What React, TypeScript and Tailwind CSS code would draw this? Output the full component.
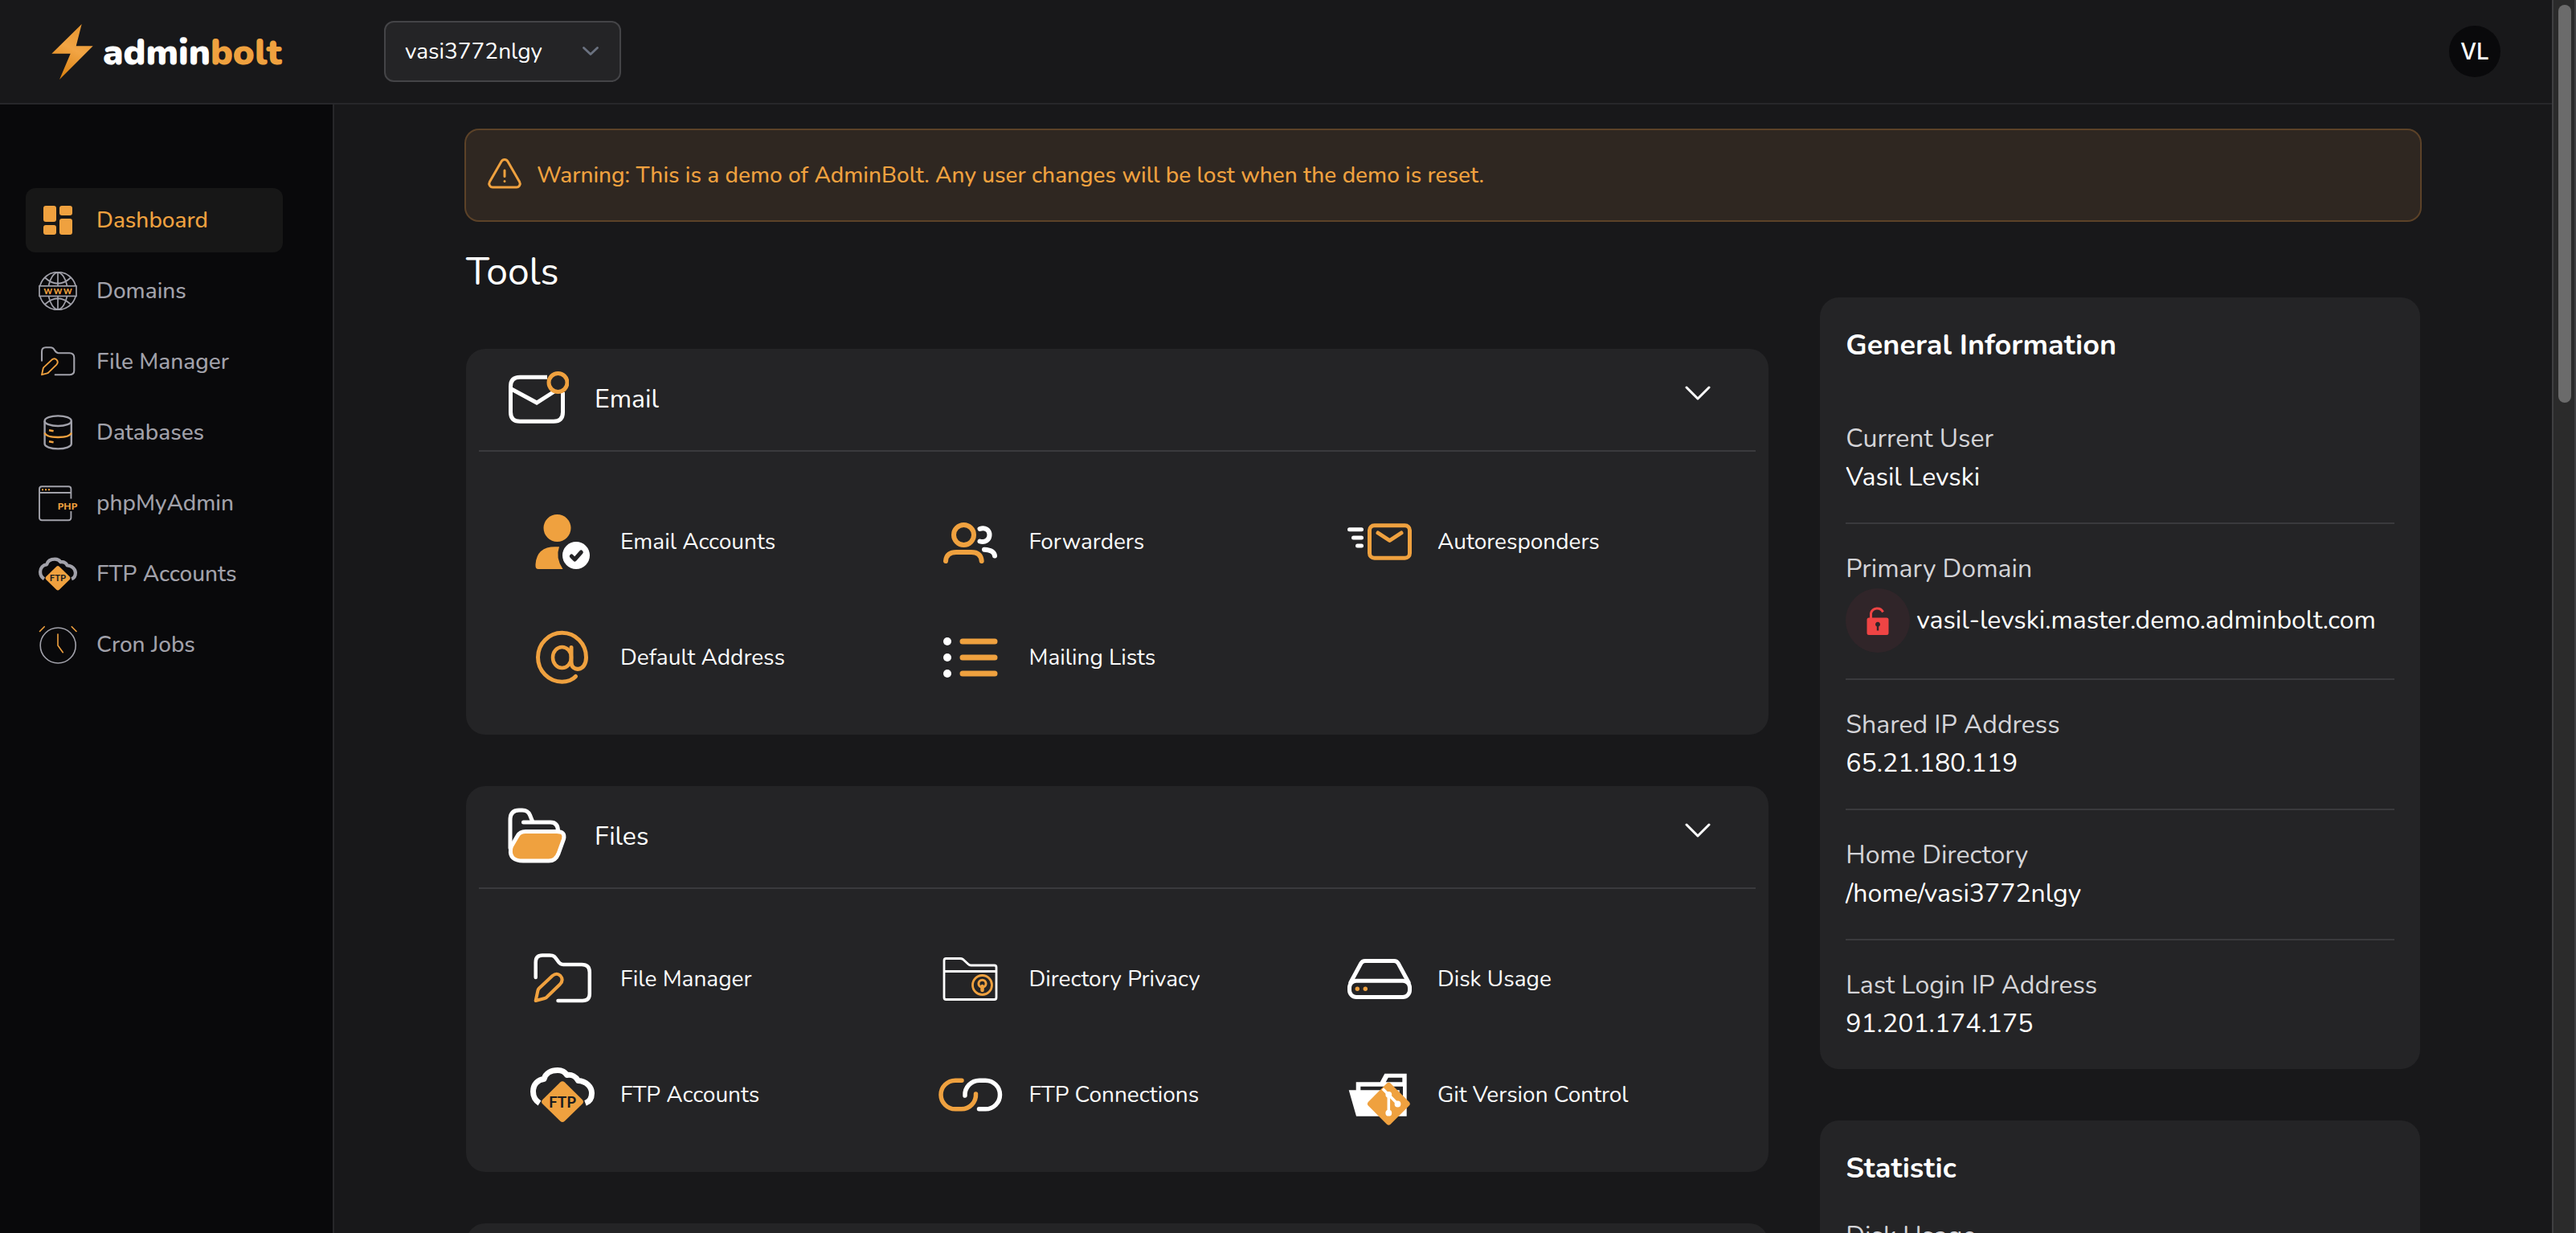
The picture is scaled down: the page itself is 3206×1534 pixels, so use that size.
import type { ReactNode } from "react";
import { HiOutlineExclamationTriangle } from "react-icons/hi2";

const ORANGE = "#efa13f";

/* ---------- Icons shared by the sidebar and the tool cards (80-unit grid) ---------- */

function FileManagerIcon({ weight = 4.5 }: { weight?: number }) {
  return (
    <svg viewBox="0 0 80 80" fill="none" className="size-full" aria-hidden="true" strokeLinecap="round" strokeLinejoin="round">
      <path d="M6.7 38V19Q6.700 10.500 15 10.500H24C29.500 10.500 30.500 12 33.500 16.500Q37 22 41 22H64Q73.800 22 73.800 31.500V58.500Q73.800 67 65 67H34.500" stroke="currentColor" strokeWidth={weight} />
      <path d="M6.700 67L9.500 54Q10 52.500 11 51.500L27.500 36Q33 31.500 37.500 36Q42 41 37 46.500L21.500 61.500Q20 63.500 18 64Z" stroke={ORANGE} strokeWidth={weight * 0.9} />
    </svg>
  );
}

function FtpAccountsIcon() {
  return (
    <svg viewBox="0 0 80 80" fill="none" className="size-full" aria-hidden="true">
      <path d="M11.500 50.500C6 47 3.500 42 3.500 36C3.500 27 9.500 21 17 20.500C19 13 26 9.500 34 9.500C39 9.500 43.500 12 45.500 15.500C51.500 14.500 57 17.500 59.500 22.500C69.500 23 76.500 30 76.500 38C76.500 44 74 48.500 68.500 50.500" stroke="currentColor" strokeWidth="7" strokeLinejoin="round" />
      <path d="M37.200 24.600Q40 22 42.800 24.600L64.600 45.900Q67.400 48.700 64.600 51.500L42.800 72.800Q40 75.400 37.200 72.800L15.400 51.500Q12.600 48.700 15.400 45.900Z" fill={ORANGE} />
      <text x="40" y="55.500" textAnchor="middle" fontFamily="Lato, sans-serif" fontWeight="700" fontSize="19" fill="#1c1c1e">FTP</text>
    </svg>
  );
}

/* ---------- Sidebar icons (48-unit grid) ---------- */

function DashboardIcon() {
  return (
    <svg viewBox="0 0 48 48" className="size-full" aria-hidden="true" fill={ORANGE}>
      <rect x="6" y="6" width="16" height="20" rx="3" />
      <rect x="6" y="30" width="16" height="12" rx="3" />
      <rect x="26" y="6" width="16" height="12" rx="3" />
      <rect x="26" y="22" width="16" height="20" rx="3" />
    </svg>
  );
}

function DomainsIcon() {
  return (
    <svg viewBox="0 0 48 48" fill="none" className="size-full" aria-hidden="true" stroke="currentColor" strokeWidth="1.700">
      <path d="M1.800 17.500A23 23 0 0 1 46.200 17.500M1.800 30.500A23 23 0 0 0 46.200 30.500" />
      <path d="M12.500 17.500C14.500 8 19 1.200 24 1.200S33.500 8 35.500 17.500M12.500 30.500C14.500 40 19 46.800 24 46.800S33.500 40 35.500 30.500" />
      <path d="M24 1V17.500M24 30.500V47M8 7.500Q24 22 40 7.500M8 40.500Q24 26 40 40.500" />
      <rect x="1" y="17.800" width="46" height="12.600" />
      <g textAnchor="middle" fontFamily="Lato, sans-serif" fontWeight="900" fontSize="10" fill={ORANGE} stroke="none">
        <text x="11.800" y="27.700">W</text>
        <text x="24" y="27.700">W</text>
        <text x="36.200" y="27.700">W</text>
      </g>
    </svg>
  );
}

function DatabaseIcon() {
  return (
    <svg viewBox="0 0 48 48" fill="none" className="size-full" aria-hidden="true" stroke="currentColor" strokeWidth="2.400">
      <ellipse cx="24.200" cy="9.700" rx="16.600" ry="6.300" />
      <path d="M7.600 10V38C7.600 41.500 15 44.400 24.200 44.400S40.800 41.500 40.800 38V10" />
      <path d="M7.600 24.500C8.600 27.800 15 30 24.200 30S39.800 27.800 40.800 24.500M13 21.300L18.600 22.300M13 35.300L18.600 36.300" stroke={ORANGE} />
    </svg>
  );
}

function PhpIcon() {
  return (
    <svg viewBox="0 0 48 48" fill="none" className="size-full overflow-visible" aria-hidden="true" stroke="currentColor" strokeWidth="1.900">
      <path d="M40.400 18.500V6.500Q40.400 3.300 37.200 3.300H4.200Q1 3.300 1 6.500V42Q1 45.200 4.200 45.200H37.200Q40.400 45.200 40.400 42V34M1 11H40.400" />
      <path d="M4 7.300H6M8 7.300H10M12 7.300H14" stroke={ORANGE} strokeWidth="2" />
      <text x="36" y="31.500" textAnchor="middle" fontFamily="Lato, sans-serif" fontWeight="900" fontSize="12" fill={ORANGE} stroke="none">PHP</text>
    </svg>
  );
}

function CronIcon() {
  return (
    <svg viewBox="0 0 48 48" fill="none" className="size-full" aria-hidden="true" stroke="currentColor" strokeWidth="1.600" strokeLinecap="round" strokeLinejoin="round">
      <circle cx="24.200" cy="25" r="22" />
      <path d="M24 11V25L30.300 33.700M1.500 7.500L7.200 1.700M47 7.500L41.300 1.700" stroke={ORANGE} />
    </svg>
  );
}

/* ---------- Tool icons (80-unit grid) ---------- */

function Tool80({ children }: { children: ReactNode }) {
  return (
    <svg viewBox="0 0 80 80" fill="none" className="size-full" aria-hidden="true" strokeLinecap="round" strokeLinejoin="round">
      {children}
    </svg>
  );
}

const emailIcon = (
  <Tool80>
    <path d="M53 12.200H19Q7.500 12.200 7.500 23.700V55.700Q7.500 67.200 19 67.200H61Q72.500 67.200 72.500 55.700V31" stroke="#fff" strokeWidth="5" strokeLinecap="butt" />
    <path d="M8.500 27L40 44L62 30" stroke="#fff" strokeWidth="5" strokeLinejoin="miter" strokeLinecap="butt" />
    <circle cx="66.500" cy="19" r="11.500" stroke={ORANGE} strokeWidth="5" fill="#242426" />
  </Tool80>
);

const filesIcon = (
  <Tool80>
    <path d="M7 54V19Q7 7 18 7H22Q29 7 31.500 13L34.500 20.500" stroke="#fff" strokeWidth="5" />
    <path d="M23.500 22H57Q66.500 22 66.500 33" stroke="#fff" strokeWidth="5" />
    <path d="M26 33.500H65Q76 33.500 73.500 43L67 61Q63.500 70 55 70H23Q6 70 7.500 56Q7.500 54 9 51L16 39Q19 33.500 26 33.500Z" fill={ORANGE} stroke="#fff" strokeWidth="5" />
  </Tool80>
);

const emailAccountsIcon = (
  <Tool80>
    <circle cx="33.500" cy="23" r="17" fill={ORANGE} />
    <path d="M36 46.300Q31 60 40.500 74H10Q6.500 74 6.500 70V68Q8 46.300 31 46.300Z" fill={ORANGE} />
    <circle cx="57" cy="57" r="17" fill="#fff" />
    <path d="M51.300 58L55.300 62L63.300 53" stroke="#242426" strokeWidth="5" />
  </Tool80>
);

const forwardersIcon = (
  <Tool80>
    <circle cx="31.500" cy="31.500" r="12.500" stroke={ORANGE} strokeWidth="6" />
    <path d="M9 64C9.500 56 15 53 22 53H41C48 53 53 56 53.700 64" stroke={ORANGE} strokeWidth="6" />
    <path d="M51.500 24C58 21.500 63.500 25.500 63.500 31.500S58 41.500 51.500 39.500M57 49.700C64 50 69.500 52.500 70 57.500" stroke="#fff" strokeWidth="6" />
  </Tool80>
);

const autorespondersIcon = (
  <Tool80>
    <path d="M2.500 24.700H17.500M7.500 35H17.500M12.500 45H17.500" stroke="#fff" strokeWidth="5" />
    <rect x="27.500" y="19.700" width="50" height="40.600" rx="6" stroke={ORANGE} strokeWidth="5" />
    <path d="M38 29L52.500 38.500L67 29" stroke={ORANGE} strokeWidth="5" />
  </Tool80>
);

const addressIcon = (
  <Tool80>
    <ellipse cx="39.500" cy="40" rx="11.500" ry="13" stroke={ORANGE} strokeWidth="4.500" />
    <path d="M51 27.500V46C51 58 69.500 58 69.500 40A30 30.500 0 1 0 39.500 70.300C46 70.300 53 67.500 56.500 63.500" stroke={ORANGE} strokeWidth="5" />
  </Tool80>
);

const mailingIcon = (
  <Tool80>
    <g fill="#fff">
      <circle cx="11" cy="20" r="5" />
      <circle cx="11" cy="40" r="5" />
      <circle cx="11" cy="60" r="5" />
    </g>
    <path d="M30 20H70M30 40H70M30 60H70" stroke={ORANGE} strokeWidth="7" />
  </Tool80>
);

const directoryIcon = (
  <Tool80>
    <path d="M7 30.500V17Q7 14.500 9.500 14.500H27Q29 14.500 30.500 15.500L37 21.500Q38.500 23 40.500 23H69.500Q72 23 72 25.500V63Q72 65.500 69.500 65.500H9.500Q7 65.500 7 63V30.500H72" stroke="#fff" strokeWidth="2.800" />
    <circle cx="54.500" cy="47.500" r="12" stroke={ORANGE} strokeWidth="2.800" />
    <circle cx="54.500" cy="45.800" r="4.600" stroke={ORANGE} strokeWidth="3" />
    <path d="M54.500 49V54" stroke={ORANGE} strokeWidth="4.500" />
  </Tool80>
);

const diskIcon = (
  <Tool80>
    <rect x="2.500" y="42.300" width="75" height="20.200" rx="8.500" stroke="#fff" strokeWidth="5" />
    <path d="M3.800 44.500L16.800 20.500Q18.500 17.500 22 17.500H58Q61.500 17.500 63.200 20.500L76.200 44.500" stroke="#fff" strokeWidth="5" />
    <circle cx="12.300" cy="52.300" r="2.700" fill={ORANGE} />
    <circle cx="22.300" cy="52.300" r="2.700" fill={ORANGE} />
  </Tool80>
);

const connectionsIcon = (
  <Tool80>
    <path d="M29 22.200H21A18 17.800 0 0 0 21 57.800H28.500A18 17.800 0 0 0 46.500 39" stroke={ORANGE} strokeWidth="5.500" />
    <path d="M50.500 57.800H58.500A18 17.800 0 0 0 58.500 22.200H51A18 17.800 0 0 0 33 41" stroke="#fff" strokeWidth="5.500" />
  </Tool80>
);

const gitIcon = (
  <Tool80>
    <path fillRule="evenodd" fill="#fff" d="M1.700 34.300H10.700V24.300H40.700L46.300 13.700H73.700V66.700H11ZM50.800 18.700L47.700 24.300H68.300V18.700ZM16.300 29.800V34.300H64.700V48H69V29.800Z" />
    <path d="M49 25.800Q51.300 23.800 53.600 25.800L76.800 49Q78.900 51.300 76.800 53.600L53.600 76.800Q51.300 78.900 49 76.800L25.800 53.600Q23.800 51.300 25.800 49Z" fill={ORANGE} />
    <path d="M43.800 32.500L51.300 40L62.300 51.300M51.300 40V62.700" stroke="#fff" strokeWidth="3.500" strokeLinecap="butt" />
    <g fill="#fff">
      <circle cx="51.300" cy="39.800" r="3.900" />
      <circle cx="62.500" cy="51.500" r="3.900" />
      <circle cx="51.300" cy="62.700" r="3.900" />
    </g>
  </Tool80>
);

/* ---------- Data ---------- */

const navigation: { label: string; icon: ReactNode; active?: boolean }[] = [
  { label: "Dashboard", icon: <DashboardIcon />, active: true },
  { label: "Domains", icon: <DomainsIcon /> },
  { label: "File Manager", icon: <FileManagerIcon weight={3.5} /> },
  { label: "Databases", icon: <DatabaseIcon /> },
  { label: "phpMyAdmin", icon: <PhpIcon /> },
  { label: "FTP Accounts", icon: <FtpAccountsIcon /> },
  { label: "Cron Jobs", icon: <CronIcon /> },
];

type Tool = { label: string; icon: ReactNode };

const emailTools: Tool[] = [
  { label: "Email Accounts", icon: emailAccountsIcon },
  { label: "Forwarders", icon: forwardersIcon },
  { label: "Autoresponders", icon: autorespondersIcon },
  { label: "Default Address", icon: addressIcon },
  { label: "Mailing Lists", icon: mailingIcon },
];

const fileTools: Tool[] = [
  { label: "File Manager", icon: <FileManagerIcon /> },
  { label: "Directory Privacy", icon: directoryIcon },
  { label: "Disk Usage", icon: diskIcon },
  { label: "FTP Accounts", icon: <FtpAccountsIcon /> },
  { label: "FTP Connections", icon: connectionsIcon },
  { label: "Git Version Control", icon: gitIcon },
];

/* ---------- Pieces ---------- */

function Logo() {
  return (
    <a href="#" aria-label="adminbolt" className="flex items-center gap-3">
      <svg viewBox="0 0 52 69" className="h-[69px] w-[52px]" aria-hidden="true">
        <defs>
          <linearGradient id="bolt" x1="0.700" y1="0" x2="0.300" y2="1">
            <stop offset="0" stopColor="#e5952f" />
            <stop offset="0.450" stopColor="#f2a545" />
            <stop offset="1" stopColor="#d9800f" />
          </linearGradient>
        </defs>
        <path d="M37.700 0L0.300 36.700H23.700L10 69L51.700 27.300H30.700Z" fill="url(#bolt)" />
      </svg>
      <span className="pt-1 text-[45px] leading-[48px] font-black text-white">
        admin<span className="text-[#efa13f]">bolt</span>
      </span>
    </a>
  );
}

function ToolCard({ title, icon, tools }: { title: string; icon: ReactNode; tools: Tool[] }) {
  return (
    <section className="rounded-3xl bg-[#242426] px-4">
      <header className="flex h-32 items-center gap-8 border-b-2 border-[#3a3a3d] px-8">
        <div className="size-20">{icon}</div>
        <h2 className="text-[32px] leading-12">{title}</h2>
        <button type="button" aria-label={`Collapse ${title}`} className="mr-6 mb-4 ml-auto">
          <svg viewBox="0 0 32 18" fill="none" className="h-[18px] w-8" aria-hidden="true">
            <path d="M2 2L16 16L30 2" stroke="#fff" strokeWidth="3" strokeLinecap="round" strokeLinejoin="round" />
          </svg>
        </button>
      </header>
      <ul className="grid grid-cols-3 gap-16 px-16 pt-18 pb-14">
        {tools.map((tool) => (
          <li key={tool.label}>
            <a href="#" className="flex items-center gap-8 text-[28px] leading-10 text-[#fafafa]">
              <span className="size-20 shrink-0 text-white">{tool.icon}</span>
              {tool.label}
            </a>
          </li>
        ))}
      </ul>
    </section>
  );
}

function InfoRow({ label, children }: { label: string; children: ReactNode }) {
  return (
    <div className="border-b-2 border-[#3a3a3d] py-8 first:pt-0 last:border-b-0 last:pb-0">
      <dt className="text-[#d4d4d8]">{label}</dt>
      <dd className="text-white">{children}</dd>
    </div>
  );
}

/* ---------- Page ---------- */

export default function App() {
  return (
    <div className="flex h-screen overflow-hidden bg-[#18181a] font-[Nunito,Lato,sans-serif] text-white">
      <div className="flex min-w-0 flex-1 flex-col">
        <header className="flex h-[130px] shrink-0 items-center border-b-2 border-[#27272a] pr-16 pl-16">
          <div className="w-[414px]">
            <Logo />
          </div>
          <div className="relative">
            <select
              aria-label="Account"
              className="h-[76px] w-[295px] appearance-none rounded-xl border-2 border-[#444447] bg-[#242426] px-6 text-[28px] text-white"
            >
              <option>vasi3772nlgy</option>
            </select>
            <svg viewBox="0 0 20 11" fill="none" className="pointer-events-none absolute top-8 right-7 h-[11px] w-5" aria-hidden="true">
              <path d="M1.500 1.500L10 9.500L18.500 1.500" stroke="#6b7280" strokeWidth="2.800" strokeLinecap="round" strokeLinejoin="round" />
            </svg>
          </div>
          <button type="button" className="ml-auto size-16 rounded-full bg-[#09090b] font-[Inter,sans-serif] text-[28px] font-medium">
            VL
          </button>
        </header>

        <div className="flex min-h-0 flex-1">
          <aside className="w-[416px] shrink-0 border-r-2 border-[#27272a] bg-[#09090b] px-8 pt-26">
            <nav aria-label="Main">
              <ul className="flex w-80 flex-col gap-2">
                {navigation.map((item) => (
                  <li key={item.label}>
                    <a
                      href="#"
                      aria-current={item.active ? "page" : undefined}
                      className={
                        item.active
                          ? "flex h-20 items-center gap-6 rounded-xl bg-[#171717] px-4 text-[28px] font-medium text-[#efa13f]"
                          : "flex h-20 items-center gap-6 rounded-xl px-4 text-[28px] font-medium text-[#a1a1aa]"
                      }
                    >
                      <span className="size-12 shrink-0">{item.icon}</span>
                      {item.label}
                    </a>
                  </li>
                ))}
              </ul>
            </nav>
          </aside>

          <main className="min-w-0 flex-1 overflow-hidden">
            <div className="mx-auto max-w-[2560px] px-16 pt-8">
              <div role="alert" className="flex h-28 items-center gap-4 rounded-2xl bg-[#2f2721] px-6 text-[28px] font-medium text-[#efa13f] ring-2 ring-[#5c4228]">
                <HiOutlineExclamationTriangle className="size-12 shrink-0" aria-hidden="true" />
                <p>Warning: This is a demo of AdminBolt. Any user changes will be lost when the demo is reset.</p>
              </div>

              <h1 className="mt-8 text-5xl leading-16">Tools</h1>

              <div className="flex items-start">
                <div className="flex w-2/3 flex-col gap-16 pt-16">
                  <ToolCard title="Email" icon={emailIcon} tools={emailTools} />
                  <ToolCard title="Files" icon={filesIcon} tools={fileTools} />
                  <section className="h-32 rounded-3xl bg-[#242426]" />
                </div>

                <div className="flex w-1/3 flex-col gap-16 pl-16 text-[32px] leading-12">
                  <section className="rounded-3xl bg-[#242426] p-8">
                    <h2 className="text-4xl leading-14 font-bold">General Information</h2>
                    <dl className="mt-16">
                      <InfoRow label="Current User">Vasil Levski</InfoRow>
                      <InfoRow label="Primary Domain">
                        <span className="flex items-center gap-2">
                          <span className="flex size-20 shrink-0 items-center justify-center rounded-full bg-[#302529]">
                            <svg viewBox="0 0 28 36" className="h-9 w-7" aria-label="Not secured" role="img">
                              <path d="M5.500 16V9A8 8 0 0 1 20.500 7.500" fill="none" stroke="#ef4444" strokeWidth="3" />
                              <path fillRule="evenodd" fill="#ef4444" d="M3 14.500H25Q27.500 14.500 27.500 17V33.500Q27.500 36 25 36H3Q0.500 36 0.500 33.500V17Q0.500 14.500 3 14.500ZM12.800 25.500V30.500H15.200V25.500A3 3 0 1 0 12.800 25.500Z" />
                            </svg>
                          </span>
                          <a href="#" className="truncate">vasil-levski.master.demo.adminbolt.com</a>
                        </span>
                      </InfoRow>
                      <InfoRow label="Shared IP Address">65.21.180.119</InfoRow>
                      <InfoRow label="Home Directory">/home/vasi3772nlgy</InfoRow>
                      <InfoRow label="Last Login IP Address">91.201.174.175</InfoRow>
                    </dl>
                  </section>

                  <section className="rounded-3xl bg-[#242426] p-8">
                    <h2 className="text-4xl leading-14 font-bold">Statistic</h2>
                    <dl className="mt-8">
                      <InfoRow label="Disk Usage">{null}</InfoRow>
                    </dl>
                  </section>
                </div>
              </div>
            </div>
          </main>
        </div>
      </div>

      <div className="w-[30px] shrink-0 border-r-2 border-l-2 border-[#3f3f41] bg-[#2b2b2b] px-[6px] pt-[6px]" aria-hidden="true">
        <div className="h-[495px] w-4 rounded-full bg-[#6b6b6b]" />
      </div>
    </div>
  );
}
